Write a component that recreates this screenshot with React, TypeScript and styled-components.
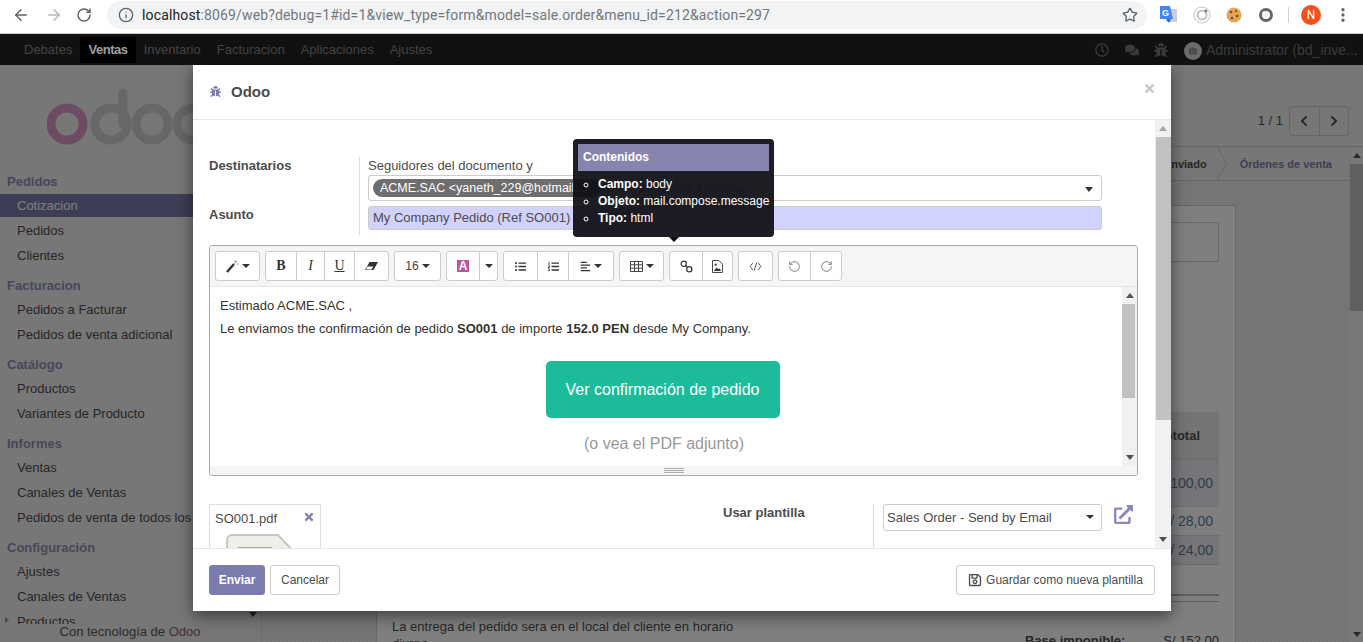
import React from "react";
import styled, { createGlobalStyle } from "styled-components";
import { ArrowLeft, ArrowRight, RotateCw, RotateCcw, Info, Star, MoreVertical } from "lucide-react";
import {
  FaBug, FaComments, FaRegClock, FaCamera, FaChevronLeft, FaChevronRight, FaTimes,
  FaListUl, FaListOl, FaAlignLeft, FaRegSave, FaExternalLinkAlt,
} from "react-icons/fa";

const Global = createGlobalStyle`
  html, body { margin: 0; padding: 0; height: 642px; overflow: hidden; background: #fff; }
  body { font-family: "Liberation Sans", Arial, sans-serif; font-size: 13px; color: #4c4c4c; }
  * { box-sizing: border-box; }
`;

/* browser chrome */
const Chrome = styled.header`
  height: 34px; display: flex; align-items: center; background: #fff; border-bottom: 1px solid #c9c9c9;
  padding: 0 0 4px 0; color: #5f6368;
`;
const NavIcon = styled.span<{ $x: number; $muted?: boolean }>`
  width: ${(p) => p.$x}px; display: flex; justify-content: center; color: ${(p) => (p.$muted ? "#b5b7ba" : "#5f6368")};
`;
const Omnibox = styled.div`
  width: 1040px; height: 28px; border-radius: 14px; background: #f1f3f4; display: flex; align-items: center;
  padding: 0 9px 0 11px; margin-left: 6px; margin-right: 3px; font-family: Roboto, sans-serif; font-size: 14px; color: #73777b; letter-spacing: .14px;
`;
const Url = styled.span`
  flex: 1; margin-left: 8px; white-space: nowrap; strong { font-weight: 400; color: #202124; }
`;
const Ext = styled.span<{ $w: number }>`
  width: ${(p) => p.$w}px; display: flex; justify-content: center; align-items: center;
`;
const ChromeSep = styled.span`
  width: 1px; height: 16px; background: #cfd1d3; margin: 0 12px 0 6px;
`;
const Avatar = styled.span`
  width: 20px; height: 20px; border-radius: 50%; background: #f4511e; color: #fff; font-family: Roboto, sans-serif;
  font-size: 12px; display: flex; align-items: center; justify-content: center; margin-right: 13px;
`;

/* page */
const Page = styled.div`
  position: relative; height: 608px; display: flex; flex-direction: column; overflow: hidden;
`;
const Navbar = styled.nav`
  height: 31px; flex: none; background: #111; display: flex; align-items: center; padding: 0 15px 0 16px; color: #444;
`;
const NavItem = styled.a<{ $active?: boolean }>`
  height: 26px; line-height: 26px; padding: 0 8px; font-size: 13px;
  font-weight: ${(p) => (p.$active ? 700 : 400)}; color: ${(p) => (p.$active ? "#a0a0a0" : "#444")};
  letter-spacing: ${(p) => (p.$active ? "-0.45px" : "0")};
  background: ${(p) => (p.$active ? "#000" : "transparent")};
`;
const NavRight = styled.div`
  margin-left: auto; display: flex; align-items: center; color: #3c3c3c; font-size: 13px;
`;
const NavGlyph = styled.span<{ $w: number }>`
  width: ${(p) => p.$w}px; display: flex; justify-content: center; font-size: 14px;
`;
const UserPic = styled.span`
  width: 18px; height: 18px; border-radius: 50%; background: #6b6b6b; color: #4a4a4a; display: flex; align-items: center;
  justify-content: center; font-size: 8px; margin: 2px 4px 0 8px;
`;
const UserName = styled.span`
  white-space: nowrap; width: 142px; font-size: 14px;
`;
const Main = styled.div`
  flex: 1; display: flex; min-height: 0;
`;
const Sidebar = styled.aside`
  width: 262px; flex: none; background: #f0eeee; border-right: 1px solid #ddd; display: flex; flex-direction: column; height: 577px;
`;
const SideScroll = styled.div`
  height: 559px; display: flex; overflow: hidden;
`;
const SideList = styled.div`
  flex: 1; min-width: 0; overflow: hidden;
`;
const Logo = styled.svg`
  display: block; margin: 22px 0 16px 47px;
`;
const SideHead = styled.div<{ $first?: boolean }>`
  height: 29px; padding: ${(p) => (p.$first ? 8 : 10)}px 0 0 7px; line-height: 18px; font-weight: 700; color: #8f8cb4; font-size: 13px;
`;
const SideItem = styled.div<{ $active?: boolean; $arrow?: boolean }>`
  height: 25px; line-height: 27px; padding-left: 17px; white-space: nowrap; font-size: 13px; position: relative; overflow: hidden;
  color: ${(p) => (p.$active ? "#fff" : "#4c4c4c")};
  background: ${(p) => (p.$active ? "#7c7bad" : "transparent")};
  ${(p) => p.$arrow && `&::before { content: ""; position: absolute; left: 5px; top: 9px; border: 3px solid transparent; border-left: 4px solid #999; }`}
`;
const SideFirst = styled(SideItem)`
  height: 23px; line-height: 23px;
`;
const SideTrack = styled.div`
  width: 17px; flex: none; background: #f1f1f1; display: flex; flex-direction: column; justify-content: flex-end; align-items: center; padding-bottom: 7px;
`;
const SideFoot = styled.div`
  height: 18px; line-height: 16px; text-align: center; font-size: 13px; color: #555; white-space: nowrap; padding-right: 1px;
  span { color: #875a7b; }
`;
const ArrowUp = styled.i<{ $c?: string }>`
  display: block; width: 0; height: 0; border: 4px solid transparent; border-top: 0; border-bottom: 5px solid ${(p) => p.$c || "#555"};
`;
const ArrowDown = styled.i<{ $c?: string }>`
  display: block; width: 0; height: 0; border: 4px solid transparent; border-bottom: 0; border-top: 5px solid ${(p) => p.$c || "#505050"};
`;
const Content = styled.div`
  flex: 1; min-width: 0; display: flex; flex-direction: column;
`;
const ControlPanel = styled.div`
  height: 82px; flex: none; background: #f0eeee; border-bottom: 1px solid #ccc; display: flex; justify-content: flex-end;
  align-items: flex-start; padding: 41px 14px 0 0;
`;
const PagerText = styled.span`
  font-size: 13px; color: #4c4c4c; line-height: 29px; margin-right: 6px;
`;
const Pager = styled.div`
  width: 60px; height: 30px; border: 1px solid #ccc; border-radius: 3px; display: flex;
`;
const PagerBtn = styled.span`
  flex: 1; display: flex; align-items: center; justify-content: center; color: #4c4c4c; font-size: 12px;
  & + & { border-left: 1px solid #ccc; }
`;
const SheetRow = styled.div`
  flex: 1; min-height: 0; display: flex;
`;
const Sheet = styled.div`
  flex: 1; min-width: 0; overflow: hidden; display: flex; flex-direction: column;
  background-color: #eeeeee;
  background-image: conic-gradient(#e6e6e6 25%, #f0f0f0 0 50%, #e6e6e6 0 75%, #f0f0f0 0);
  background-size: 4px 4px;
`;
const Statusbar = styled.div`
  height: 34px; flex: none; background: #f0eeee; border-bottom: 1px solid #ccc; display: flex; justify-content: flex-end; align-items: center;
  padding-right: 16px; font-size: 11px; font-weight: 700; color: #4c4c4c; margin-right: 2px;
`;
const StatusDone = styled.span`
  color: #4c4c4c; margin-right: 10px;
`;
const StatusNow = styled.span`
  color: #7c7bad; margin-left: 13px;
`;
const Paper = styled.div`
  width: 860px; margin: 24px auto 0; background: #fff; border: 1px solid #ccc; padding: 16px 16px 0 15px; flex: none; height: 480px;
`;
const PaperBox = styled.div`
  height: 40px; border: 1px solid #ccc; margin-bottom: 150px;
`;
const TotalHead = styled.div`
  height: 48px; background: #e9e9e9; text-align: right; line-height: 47px; padding-right: 19px; font-weight: 700; color: #4c4c4c; font-size: 13px; border-bottom: 2px solid #ddd;
`;
const TotalRow = styled.div<{ $h: number; $shade?: boolean }>`
  height: ${(p) => p.$h}px; line-height: ${(p) => p.$h}px; text-align: right; padding-right: 6px; font-size: 14px; color: #5f7891;
  background: ${(p) => (p.$shade ? "#ecebf3" : "transparent")}; border-bottom: 1px solid #ddd;
`;
const DoubleRule = styled.div`
  height: 8px; margin-top: 29px; border-top: 2px solid #bbb; border-bottom: 1px solid #bbb;
`;
const NoteRow = styled.div`
  display: flex; justify-content: space-between; margin-top: 16px; color: #4c4c4c; font-size: 13px;
`;
const Note = styled.div`
  width: 360px; line-height: 17px;
`;
const BaseRow = styled.div`
  width: 194px; display: flex; justify-content: space-between; font-size: 13px; margin-top: 15px;
  b { font-weight: 700; }
`;
const PageTrack = styled.div`
  width: 13px; flex: none; background: #f1f1f1; display: flex; flex-direction: column; align-items: center; padding: 6px 0 5px;
`;
const PageThumb = styled.div`
  width: 13px; height: 147px; background: #c1c1c1; margin: 6px 0 auto;
`;

const Backdrop = styled.div`
  position: absolute; left: 0; right: 0; top: 31px; bottom: 0; background: rgba(0, 0, 0, 0.5);
`;

/* dialog */
const Modal = styled.div`
  position: absolute; left: 193px; top: 31px; width: 978px; height: 546px; background: #fff; box-shadow: 0 5px 15px rgba(0, 0, 0, 0.5);
  display: flex; flex-direction: column;
`;
const ModalHead = styled.div`
  height: 55px; flex: none; border-bottom: 1px solid #e5e5e5; display: flex; align-items: center; padding: 0 16px;
`;
const ModalBug = styled.span`
  color: #7c7bad; font-size: 11px; display: flex; margin: 0 10px 2px 1px;
`;
const ModalTitle = styled.h4`
  margin: 0 0 2px; font-size: 15px; font-weight: 700; color: #4c4c4c;
`;
const Close = styled.span`
  margin-left: auto; margin-bottom: 7px; color: #c8c8c8; font-size: 13px; display: flex; margin-right: -1px;
`;
const ModalBody = styled.div`
  height: 428px; flex: none; display: flex; overflow: hidden;
`;
const BodyMain = styled.div`
  flex: 1; min-width: 0; padding: 37px 17px 0 16px; overflow: hidden;
`;
const BodyTrack = styled.div`
  width: 16px; flex: none; background: #f1f1f1; display: flex; flex-direction: column; align-items: center; padding: 6px 0 6px;
`;
const BodyThumb = styled.div`
  width: 15px; height: 283px; background: #c1c1c1; margin: 6px 0 auto;
`;
const FormGrid = styled.div`
  display: grid; grid-template-columns: 150px 1fr; grid-template-rows: 47px 31px;
`;
const FieldLabel = styled.label<{ $top?: number }>`
  font-weight: 700; color: #4c4c4c; font-size: 13px; line-height: 18px; padding-top: ${(p) => p.$top || 0}px;
`;
const FieldValue = styled.div`
  border-left: 1px solid #ddd; padding: 0 36px 0 8px;
`;
const FollowText = styled.div`
  line-height: 18px; color: #4c4c4c; font-size: 13px;
`;
const TagInput = styled.div`
  height: 26px; border: 1px solid #ccc; border-radius: 3px; display: flex; align-items: center; padding-left: 4px; position: relative; font-size: 12px; color: #999;
  &::after { content: ""; position: absolute; right: 8px; top: 11px; border: 4px solid transparent; border-bottom: 0; border-top: 5px solid #333; }
`;
const Tag = styled.span`
  width: 228px; height: 18px; line-height: 18px; background: #6e6e6e; color: #fff; border-radius: 9px; padding-left: 7px; font-size: 12.5px; white-space: nowrap; overflow: hidden; margin-right: 1px;
`;
const Subject = styled.div`
  height: 24px; line-height: 22px; background: #d2d2ff; border: 1px solid #ccc; border-radius: 3px; padding-left: 4px; color: #4c4c4c; font-size: 13px; margin-top: 2px;
`;

const Editor = styled.div`
  margin-top: 10px; height: 231px; border: 1px solid #a9a9a9; border-radius: 3px; display: flex; flex-direction: column; overflow: hidden;
`;
const Toolbar = styled.div`
  height: 41px; flex: none; background: #f5f5f5; border-bottom: 1px solid #e5e5e5; display: flex; gap: 5px; padding: 5px 0 0 5px;
`;
const ToolGroup = styled.div`
  height: 30px; display: flex; background: #fff; border: 1px solid #ccc; border-radius: 3px; color: #333;
`;
const ToolBtn = styled.span<{ $w: number; $muted?: boolean }>`
  width: ${(p) => p.$w}px; display: flex; align-items: center; justify-content: center; gap: 3px; font-size: 11px;
  color: ${(p) => (p.$muted ? "#999" : "#333")};
  & + & { border-left: 1px solid #ccc; }
`;
const FontSizeText = styled.span`
  font-size: 12px; color: #444;
`;
const SerifGlyph = styled.span<{ $bold?: boolean; $italic?: boolean; $under?: boolean }>`
  font-family: "Liberation Serif", serif; font-size: 14px; line-height: 14px;
  font-weight: ${(p) => (p.$bold ? 700 : 400)}; font-style: ${(p) => (p.$italic ? "italic" : "normal")};
  text-decoration: ${(p) => (p.$under ? "underline" : "none")};
`;
const Caret = styled.i`
  width: 0; height: 0; border: 4px solid transparent; border-bottom: 0; border-top: 4px solid #333; display: inline-block;
`;
const ColorA = styled.span`
  width: 12px; height: 12px; background: #bd52a4; color: #fff; font-size: 12px; font-weight: 700; line-height: 12px; text-align: center; display: block;
`;
const EditorBody = styled.div`
  height: 179px; flex: none; display: flex; overflow: hidden;
`;
const EditorText = styled.div`
  flex: 1; min-width: 0; padding: 7px 17px 0 10px; color: #333; font-size: 13px;
`;
const Para = styled.p`
  margin: 0; line-height: 23px; color: #333; font-size: 13px; white-space: nowrap; b { font-weight: 700; }
`;
const MailBtnRow = styled.div`
  display: flex; justify-content: center; margin-top: 21px;
`;
const MailBtn = styled.span`
  width: 234px; height: 57px; background: #1cbc9b; color: #fff; border-radius: 5px; font-size: 16px; display: flex; align-items: center; justify-content: center;
`;
const Hint = styled.div`
  text-align: center; font-size: 16px; color: #999; margin-top: 16px; padding-left: 3px; line-height: 20px;
`;
const EditorTrack = styled.div`
  width: 15px; flex: none; background: #f1f1f1; display: flex; flex-direction: column; align-items: center; padding: 6px 0 6px;
`;
const EditorThumb = styled.div`
  width: 13px; height: 94px; background: #c1c1c1; margin: 6px 2px auto 0;
`;
const Resizer = styled.div`
  height: 9px; flex: none; background: #f5f5f5; display: flex; flex-direction: column; align-items: center; justify-content: center; gap: 1px;
  i { display: block; width: 20px; height: 1px; background: #aaa; }
`;
const LowerGrid = styled.div`
  display: grid; grid-template-columns: 514px 150px 1fr; margin-top: 28px; height: 60px;
`;
const Attachment = styled.div`
  width: 112px; height: 120px; border: 1px solid #ddd; padding: 5px; position: relative;
`;
const AttachName = styled.div`
  font-size: 13px; line-height: 17px; color: #4c4c4c;
`;
const AttachX = styled.span`
  position: absolute; right: 5px; top: 6px; color: #7c7bad; font-size: 12px; display: flex;
`;
const AttachDoc = styled.svg`
  display: block; margin: 7px 0 0 11px;
`;
const TemplateLabel = styled.label`
  font-weight: 700; color: #4c4c4c; font-size: 13px; line-height: 18px;
`;
const TemplateCell = styled.div`
  border-left: 1px solid #ddd; padding-left: 9px; display: flex; align-items: flex-start; gap: 12px;
`;
const Select = styled.div`
  width: 219px; height: 27px; border: 1px solid #ccc; border-radius: 3px; line-height: 25px; padding-left: 3px; color: #4c4c4c; font-size: 13px; position: relative;
  &::after { content: ""; position: absolute; right: 7px; top: 10px; border: 4px solid transparent; border-bottom: 0; border-top: 4px solid #333; }
`;
const LinkOut = styled.span`
  color: #8a89b8; font-size: 19px; display: flex; margin-top: 1px;
`;
const ModalFoot = styled.div`
  height: 63px; flex: none; border-top: 1px solid #e5e5e5; display: flex; align-items: center; padding: 0 16px; gap: 5px;
`;
const PrimaryBtn = styled.button`
  width: 56px; height: 30px; background: #7c7bad; color: #fff; border: 1px solid #7c7bad; border-radius: 3px; font: 700 12px "Liberation Sans", sans-serif; padding: 0;
`;
const GhostBtn = styled.button<{ $w: number; $right?: boolean }>`
  width: ${(p) => p.$w}px; height: 30px; background: #fff; color: #4c4c4c; border: 1px solid #ccc; border-radius: 3px; font: 400 12px "Liberation Sans", sans-serif; padding: 0;
  display: inline-flex; align-items: center; justify-content: center; gap: 4px;
  margin-left: ${(p) => (p.$right ? "auto" : "0")};
  svg { font-size: 14px; }
`;

/* tooltip */
const Tooltip = styled.div`
  position: absolute; left: 573px; top: 105px; width: 201px; height: 98px; background: rgba(15, 15, 22, 0.94); border-radius: 4px; padding: 5px; color: #fff; font-size: 12px;
  &::after { content: ""; position: absolute; left: 96px; bottom: -5px; border: 5px solid transparent; border-bottom: 0; border-top: 5px solid #0f0f16; }
`;
const TipHead = styled.div`
  height: 27px; line-height: 26px; background: #8785b0; padding-left: 5px; font-weight: 700; color: #fff; font-size: 12px;
`;
const TipList = styled.ul`
  list-style: circle; margin: 5px 0 0; padding: 0 0 0 20px; font-size: 12px;
`;
const TipItem = styled.li`
  line-height: 17px; white-space: nowrap; font-size: 12px; b { font-weight: 700; }
`;

const Section = ({ title, first, children }: { title: string; first?: boolean; children: React.ReactNode }) => (
  <>
    <SideHead $first={first}>{title}</SideHead>
    {children}
  </>
);

export default function App() {
  return (
    <>
      <Global />
      <Chrome>
        <NavIcon $x={42}><ArrowLeft size={18} strokeWidth={2} /></NavIcon>
        <NavIcon $x={24} $muted><ArrowRight size={18} strokeWidth={2} /></NavIcon>
        <NavIcon $x={35}><RotateCw size={16} strokeWidth={2.2} /></NavIcon>
        <Omnibox>
          <Info size={16} color="#5f6368" />
          <Url><strong>localhost</strong>:8069/web?debug=1#id=1&amp;view_type=form&amp;model=sale.order&amp;menu_id=212&amp;action=297</Url>
          <Star size={16} color="#5f6368" />
        </Omnibox>
        <Ext $w={36}>
          <svg width="17" height="17" viewBox="0 0 17 17">
            <rect x="6" y="3" width="11" height="13" fill="#ccd0d4" />
            <path d="M0 0h10l3 13H0z" fill="#4285f4" />
            <path d="M6 13h5l-2 4z" fill="#3367d6" />
            <text x="2" y="10" fontFamily="Liberation Sans" fontSize="9" fontWeight="700" fill="#fff">G</text>
          </svg>
        </Ext>
        <Ext $w={32}>
          <svg width="18" height="18" viewBox="0 0 18 18" fill="none" stroke="#c4c4c4">
            <circle cx="9" cy="9" r="8" />
            <circle cx="9" cy="9" r="4.5" strokeWidth="2" />
            <circle cx="13" cy="5" r="1.4" fill="#777" stroke="none" />
          </svg>
        </Ext>
        <Ext $w={32}>
          <svg width="16" height="16" viewBox="0 0 16 16">
            <circle cx="8" cy="8" r="7.5" fill="#e3a455" />
            <circle cx="5" cy="5" r="1.3" fill="#7a4a1c" />
            <circle cx="10" cy="4" r="1" fill="#7a4a1c" />
            <circle cx="11" cy="9" r="1.3" fill="#7a4a1c" />
            <circle cx="6" cy="11" r="1.3" fill="#7a4a1c" />
          </svg>
        </Ext>
        <Ext $w={32}>
          <svg width="14" height="14" viewBox="0 0 14 14" fill="none">
            <circle cx="7" cy="7" r="5.5" stroke="#666" strokeWidth="3" />
            <circle cx="6" cy="6" r="3" fill="#eee" />
          </svg>
        </Ext>
        <ChromeSep />
        <Avatar>N</Avatar>
        <MoreVertical size={18} color="#5f6368" strokeWidth={2.4} />
      </Chrome>

      <Page>
        <Navbar>
          <NavItem>Debates</NavItem>
          <NavItem $active>Ventas</NavItem>
          <NavItem>Inventario</NavItem>
          <NavItem>Facturacion</NavItem>
          <NavItem>Aplicaciones</NavItem>
          <NavItem>Ajustes</NavItem>
          <NavRight>
            <NavGlyph $w={31}><FaRegClock /></NavGlyph>
            <NavGlyph $w={29}><FaComments /></NavGlyph>
            <NavGlyph $w={30}><FaBug /></NavGlyph>
            <UserPic><FaCamera /></UserPic>
            <UserName>Administrator (bd_inve...</UserName>
          </NavRight>
        </Navbar>

        <Main>
          <Sidebar>
            <SideScroll>
              <SideList>
                <Logo width="150" height="62" viewBox="0 0 150 62">
                  <g fill="none" strokeWidth="9">
                    <circle cx="20" cy="37" r="16" stroke="#d898c4" />
                    <circle cx="64" cy="37" r="16" stroke="#cfcfcf" />
                    <path d="M76 6V37" stroke="#cfcfcf" strokeLinecap="round" />
                    <circle cx="105" cy="37" r="16" stroke="#cfcfcf" />
                    <circle cx="146" cy="37" r="16" stroke="#cfcfcf" />
                  </g>
                </Logo>
                <Section title="Pedidos" first>
                  <SideFirst $active>Cotizacion</SideFirst>
                  <SideItem>Pedidos</SideItem>
                  <SideItem>Clientes</SideItem>
                </Section>
                <Section title="Facturacion">
                  <SideItem>Pedidos a Facturar</SideItem>
                  <SideItem>Pedidos de venta adicional</SideItem>
                </Section>
                <Section title="Catálogo">
                  <SideItem>Productos</SideItem>
                  <SideItem>Variantes de Producto</SideItem>
                </Section>
                <Section title="Informes">
                  <SideItem>Ventas</SideItem>
                  <SideItem>Canales de Ventas</SideItem>
                  <SideItem>Pedidos de venta de todos los</SideItem>
                </Section>
                <Section title="Configuración">
                  <SideItem>Ajustes</SideItem>
                  <SideItem>Canales de Ventas</SideItem>
                  <SideItem $arrow>Productos</SideItem>
                </Section>
              </SideList>
              <SideTrack><ArrowDown /></SideTrack>
            </SideScroll>
            <SideFoot>Con tecnología de <span>Odoo</span></SideFoot>
          </Sidebar>

          <Content>
            <ControlPanel>
              <PagerText>1 / 1</PagerText>
              <Pager>
                <PagerBtn><FaChevronLeft /></PagerBtn>
                <PagerBtn><FaChevronRight /></PagerBtn>
              </Pager>
            </ControlPanel>
            <SheetRow>
              <Sheet>
                <Statusbar>
                  <StatusDone>Presupuesto enviado</StatusDone>
                  <svg width="10" height="33" viewBox="0 0 10 33" fill="none" stroke="#ccc"><path d="M0 0l10 16.5L0 33" /></svg>
                  <StatusNow>Órdenes de venta</StatusNow>
                </Statusbar>
                <Paper>
                  <PaperBox />
                  <TotalHead>Subtotal</TotalHead>
                  <TotalRow $h={47} $shade>S/ 100,00</TotalRow>
                  <TotalRow $h={29}>S/ 28,00</TotalRow>
                  <TotalRow $h={29} $shade>S/ 24,00</TotalRow>
                  <DoubleRule />
                  <NoteRow>
                    <Note>La entrega del pedido sera en el local del cliente en horario diurno</Note>
                    <BaseRow><b>Base imponible:</b><span>S/ 152,00</span></BaseRow>
                  </NoteRow>
                </Paper>
              </Sheet>
              <PageTrack>
                <ArrowUp />
                <PageThumb />
                <ArrowDown />
              </PageTrack>
            </SheetRow>
          </Content>
        </Main>

        <Backdrop />

        <Modal>
          <ModalHead>
            <ModalBug><FaBug /></ModalBug>
            <ModalTitle>Odoo</ModalTitle>
            <Close><FaTimes /></Close>
          </ModalHead>
          <ModalBody>
            <BodyMain>
              <FormGrid>
                <FieldLabel>Destinatarios</FieldLabel>
                <FieldValue>
                  <FollowText>Seguidores del documento y</FollowText>
                  <TagInput>
                    <Tag>ACME.SAC &lt;yaneth_229@hotmail...</Tag>
                    Añadir contactos a notificar...
                  </TagInput>
                </FieldValue>
                <FieldLabel $top={2}>Asunto</FieldLabel>
                <FieldValue>
                  <Subject>My Company Pedido (Ref SO001)</Subject>
                </FieldValue>
              </FormGrid>

              <Editor>
                <Toolbar>
                  <ToolGroup>
                    <ToolBtn $w={43}>
                      <svg width="13" height="13" viewBox="0 0 13 13" fill="none" stroke="#333">
                        <path d="M1 12l7-8" strokeWidth="2.4" />
                        <path d="M8.5 3.5L11 1M9 .5v2M12.5 4h-2" strokeWidth="1" stroke="#888" />
                      </svg>
                      <Caret />
                    </ToolBtn>
                  </ToolGroup>
                  <ToolGroup>
                    <ToolBtn $w={30}><SerifGlyph $bold>B</SerifGlyph></ToolBtn>
                    <ToolBtn $w={28}><SerifGlyph $italic>I</SerifGlyph></ToolBtn>
                    <ToolBtn $w={30}><SerifGlyph $under>U</SerifGlyph></ToolBtn>
                    <ToolBtn $w={34}>
                      <svg width="13" height="9" viewBox="0 0 13 9" fill="#333">
                        <path d="M4.5 0H13L8.5 8H0z" fill="#333" />
                        <path d="M2.5 4.5h5.7L6.5 7.4H1z" fill="#fff" />
                      </svg>
                    </ToolBtn>
                  </ToolGroup>
                  <ToolGroup><ToolBtn $w={45}><FontSizeText>16</FontSizeText><Caret /></ToolBtn></ToolGroup>
                  <ToolGroup>
                    <ToolBtn $w={32}><ColorA>A</ColorA></ToolBtn>
                    <ToolBtn $w={18}><Caret /></ToolBtn>
                  </ToolGroup>
                  <ToolGroup>
                    <ToolBtn $w={33}><FaListUl /></ToolBtn>
                    <ToolBtn $w={31}><FaListOl /></ToolBtn>
                    <ToolBtn $w={45}><FaAlignLeft /><Caret /></ToolBtn>
                  </ToolGroup>
                  <ToolGroup>
                    <ToolBtn $w={43}>
                      <svg width="13" height="11" viewBox="0 0 13 11" fill="none" stroke="#444">
                        <path d="M.5.5h12v10H.5zM.5 3.8h12M.5 7.2h12M4.5.5v10M8.5.5v10" />
                      </svg>
                      <Caret />
                    </ToolBtn>
                  </ToolGroup>
                  <ToolGroup>
                    <ToolBtn $w={32}>
                      <svg width="13" height="13" viewBox="0 0 14 14" fill="none" stroke="#333" strokeWidth="1.3">
                        <circle cx="4" cy="4" r="2.8" />
                        <circle cx="10" cy="10" r="2.8" />
                        <path d="M6 6l2 2" />
                      </svg>
                    </ToolBtn>
                    <ToolBtn $w={30}>
                      <svg width="11" height="13" viewBox="0 0 12 14" fill="none" stroke="#333">
                        <path d="M.5.5h7l4 4v9H.5z" />
                        <path d="M2 12l3-4 2 2 1-1 2 3z" fill="#333" stroke="none" />
                        <circle cx="4" cy="5" r="1.2" fill="#333" stroke="none" />
                      </svg>
                    </ToolBtn>
                  </ToolGroup>
                  <ToolGroup>
                    <ToolBtn $w={33}>
                      <svg width="13" height="9" viewBox="0 0 14 10" fill="none" stroke="#444">
                        <path d="M4 1L1 5l3 4M10 1l3 4-3 4M8.5 .5l-3 9" />
                      </svg>
                    </ToolBtn>
                  </ToolGroup>
                  <ToolGroup>
                    <ToolBtn $w={31} $muted><RotateCcw size={13} /></ToolBtn>
                    <ToolBtn $w={31} $muted><RotateCw size={13} /></ToolBtn>
                  </ToolGroup>
                </Toolbar>
                <EditorBody>
                  <EditorText>
                    <Para>Estimado ACME.SAC ,</Para>
                    <Para>Le enviamos the confirmación de pedido <b>SO001</b> de importe <b>152.0 PEN</b> desde My Company.</Para>
                    <MailBtnRow><MailBtn>Ver confirmación de pedido</MailBtn></MailBtnRow>
                    <Hint>(o vea el PDF adjunto)</Hint>
                  </EditorText>
                  <EditorTrack>
                    <ArrowUp />
                    <EditorThumb />
                    <ArrowDown />
                  </EditorTrack>
                </EditorBody>
                <Resizer><i /><i /><i /></Resizer>
              </Editor>

              <LowerGrid>
                <Attachment>
                  <AttachName>SO001.pdf</AttachName>
                  <AttachX><FaTimes /></AttachX>
                  <AttachDoc width="74" height="90" viewBox="0 0 74 90">
                    <path d="M1 6a5 5 0 0 1 5-5h46l21 22v62a4 4 0 0 1-4 4H6a5 5 0 0 1-5-5z" fill="#efefea" stroke="#c7c7c2" strokeWidth="2" />
                    <path d="M12 13h34v2H12z" fill="#a9a9a5" />
                  </AttachDoc>
                </Attachment>
                <TemplateLabel>Usar plantilla</TemplateLabel>
                <TemplateCell>
                  <Select>Sales Order - Send by Email</Select>
                  <LinkOut><FaExternalLinkAlt /></LinkOut>
                </TemplateCell>
              </LowerGrid>
            </BodyMain>
            <BodyTrack>
              <ArrowUp $c="#a3a3a3" />
              <BodyThumb />
              <ArrowDown />
            </BodyTrack>
          </ModalBody>
          <ModalFoot>
            <PrimaryBtn>Enviar</PrimaryBtn>
            <GhostBtn $w={70}>Cancelar</GhostBtn>
            <GhostBtn $w={199} $right><FaRegSave />Guardar como nueva plantilla</GhostBtn>
          </ModalFoot>
        </Modal>

        <Tooltip>
          <TipHead>Contenidos</TipHead>
          <TipList>
            <TipItem><b>Campo:</b> body</TipItem>
            <TipItem><b>Objeto:</b> mail.compose.message</TipItem>
            <TipItem><b>Tipo:</b> html</TipItem>
          </TipList>
        </Tooltip>
      </Page>
    </>
  );
}
